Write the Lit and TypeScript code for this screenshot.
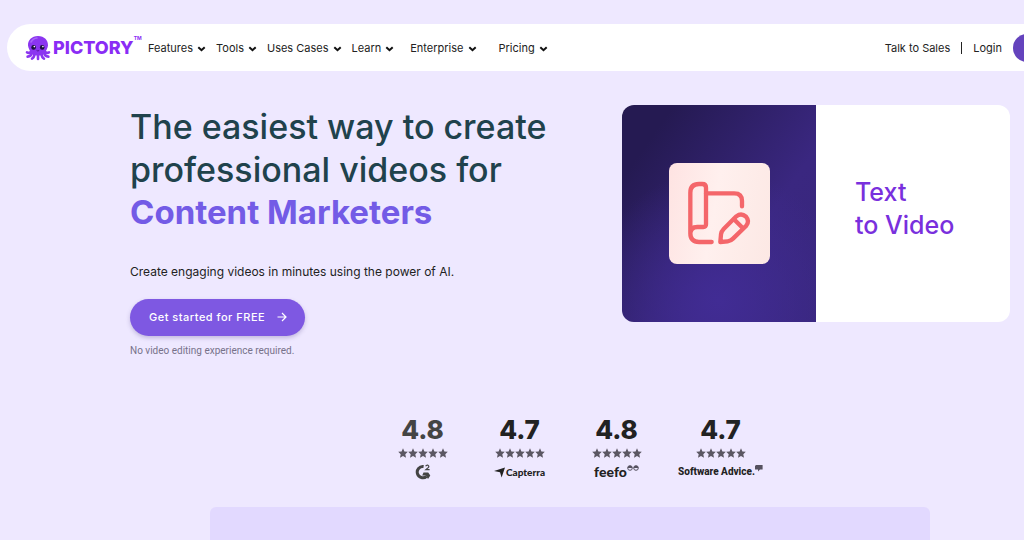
import { LitElement, html, css, svg } from "lit";
import { customElement } from "lit/decorators.js";

const STAR = "M5 0.2 6.4 3.4 9.8 3.8 7.3 6.2 8 9.7 5 8 2 9.7 2.7 6.2 0.2 3.8 3.6 3.4Z";

const menu = [
  { label: "Features", space: "" },
  { label: "Tools", space: "" },
  { label: "Uses Cases", space: "" },
  { label: "Learn", space: "wide" },
  { label: "Enterprise", space: "wider" },
  { label: "Pricing", space: "" },
];

const g2 = html`<svg width="16" height="16" viewBox="0 0 16 16" role="img" aria-label="G2">
  <path d="M8.6 2.6A5.6 5.6 0 1 0 11.6 12.3" fill="none" stroke="currentColor" stroke-width="3"/>
  <path d="M8.5 8.4H13.2L15.3 11.6 13 15 10.9 11.4H7.2Z" fill="currentColor"/>
  <path d="M10.6 2.3Q11.4 0.8 12.9 1.2 14.6 2 13.2 3.6L10.9 5.6H14.6" fill="none" stroke="currentColor" stroke-width="1.2"/>
</svg>`;

const capterra = html`<svg width="11" height="11" viewBox="0 0 11 11" aria-hidden="true">
  <path d="M0 4 11 0.5 7.6 10.5 6 5.2Z" fill="currentColor"/></svg><span class="capterra">Capterra</span>`;

const feefo = html`<span class="feefo">feefo</span><svg class="raised" width="12" height="6" viewBox="0 0 12 6" aria-hidden="true">
  <g fill="none" stroke="currentColor"><circle cx="3" cy="3" r="2.3"/><circle cx="9" cy="3" r="2.3"/></g>
  <path d="M0.7 3A2.3 2.3 0 0 1 5.3 3ZM6.7 3A2.3 2.3 0 0 1 11.3 3Z" fill="currentColor"/></svg>`;

const advice = html`<span class="advice">Software Advice.</span><svg class="raised" width="8" height="7" viewBox="0 0 8 7" aria-hidden="true">
  <path d="M1 0H7.6V4.6H5L3 6.6V4.6H0V1Z" fill="currentColor"/></svg>`;

const scores = [
  { mark: "4.8", tone: "soft", source: g2 },
  { mark: "4.7", tone: "", source: capterra },
  { mark: "4.8", tone: "", source: feefo },
  { mark: "4.7", tone: "broad", source: advice },
];

@customElement("app-root")
class AppRoot extends LitElement {
  static styles = css`
    :host {
      display: block;
      min-height: 100vh;
      box-sizing: border-box;
      padding-top: 24px;
      overflow: hidden;
      background: #eee8ff;
      color: #222;
      font-family: Inter, "Liberation Sans", sans-serif;
    }
    a { color: inherit; text-decoration: none; }
    svg { display: block; flex: none; }
    button { font: inherit; color: inherit; background: none; border: 0; padding: 0; cursor: pointer; }
    .bar {
      display: flex;
      align-items: center;
      height: 47px;
      margin: 0 -120px 0 7px;
      padding: 0 18px;
      border-radius: 24px;
      background: #fff;
      box-sizing: border-box;
      font-size: 11px;
      line-height: 16px;
      white-space: nowrap;
    }
    .brand { display: flex; align-items: center; width: 123px; color: #8a2cf5; }
    .word { margin-left: 2px; font-size: 18px; line-height: 24px; font-weight: 800; }
    .tm { align-self: flex-start; font-size: 5px; line-height: 6px; font-weight: 700; }
    .menu { display: flex; gap: 10px; flex: 1; }
    .item { display: flex; align-items: center; gap: 4px; }
    .item svg { margin-top: 2px; }
    .wide { margin-right: 6px; }
    .wider { margin-right: 12px; }
    .side { display: flex; align-items: center; gap: 11px; }
    .rule { width: 1px; height: 12px; background: #222; }
    .trial { width: 113px; height: 28px; border-radius: 14px; background: #6443bd; }

    .hero {
      display: grid;
      grid-template-columns: minmax(0, 1fr) 388px;
      gap: 24px;
      margin: 34px 14px 0 130px;
      align-items: start;
    }
    h1 { margin: 0; font-size: 34px; line-height: 43px; font-weight: 500; color: #20424c; white-space: nowrap; }
    .accent { display: block; font-size: 33px; font-weight: 700; color: #735be6; }
    .lead { margin: 28px 0 17px; font-size: 12px; line-height: 20px; }
    .cta {
      display: flex;
      align-items: center;
      gap: 12px;
      height: 37px;
      padding: 0 18px 1px 19px;
      border-radius: 19px;
      color: #fff;
      background: #7e58e2;
      box-shadow: 0 2px 4px #5a48904d;
      font-size: 11px;
      font-weight: 500;
      letter-spacing: 0.5px;
      width: fit-content;
    }
    .note { margin: 8px 0 0; font: 10px/14px Roboto, sans-serif; color: #77728a; }

    .card { display: grid; grid-template-columns: 1fr 1fr; height: 217px; border-radius: 12px; overflow: hidden; background: #fff; }
    .art {
      display: grid;
      place-items: center;
      background: radial-gradient(circle at 50% 90%, #412c94, transparent 60%), linear-gradient(125deg, #251a52 15%, #3a2780 65%, #38267c);
    }
    .tile { border-radius: 8px; background: linear-gradient(100deg, #fee3e2, #fff0ee 45%, #fce8e4); }
    .title { margin: 0; align-self: center; padding: 0 0 10px 39px; font-size: 25px; line-height: 33px; font-weight: 500; color: #7930dd; }

    .scores { display: flex; justify-content: center; margin: 56px 0 26px; padding: 0 0 0 126px; list-style: none; }
    .score { display: flex; flex-direction: column; align-items: center; width: 97px; color: #222; }
    .score.soft { color: #444; }
    .score.broad { width: 111px; }
    .mark { font-size: 26px; line-height: 32px; font-weight: 800; }
    .stars { margin-top: 2px; color: #5b5763; }
    .source { display: flex; align-items: center; height: 18px; margin-top: 5px; white-space: nowrap; line-height: 14px; }
    .capterra { margin-left: 1px; font-family: Lato, sans-serif; font-size: 10px; font-weight: 900; }
    .feefo { font-family: Lato, sans-serif; font-size: 14px; font-weight: 900; }
    .advice { font-family: Roboto, sans-serif; font-size: 10px; font-weight: 800; }
    .raised { align-self: flex-start; margin-top: 2px; color: #55515f; }
    .panel { height: 60px; margin: 0 94px 0 210px; border-radius: 6px 6px 0 0; background: #e2d9ff; }
  `;

  private octopus() {
    return html`<svg width="26" height="26" viewBox="0 0 26 26" aria-hidden="true">
      <g fill="none" stroke="#8b35f0" stroke-width="2.6" stroke-linecap="round">
        <path d="M7 15Q5 19 2 17.4M7 17Q6.4 21.4 2.6 21.6M9.5 18Q9.6 22.4 7 23.6M13 18V24M16.5 18Q16.4 22.4 19 23.6M19 17Q19.6 21.4 23.4 21.6M19 15Q21 19 24 17.4"/>
      </g>
      <path d="M13 1C19.4 1 23.2 5.4 23 10.4 22.8 13.6 20.6 15 20.6 18 17 21.4 9 21.4 5.4 18 5.4 15 3.2 13.6 3 10.4 2.8 5.4 6.6 1 13 1Z" fill="#8b35f0"/>
      <path d="M6 7Q8 3.4 12 3" fill="none" stroke="#a766f8" stroke-width="1.6" stroke-linecap="round"/>
      <circle cx="8.6" cy="12.4" r="2.3" fill="#1c1040"/><circle cx="17.2" cy="12.4" r="2.3" fill="#1c1040"/>
      <circle cx="9.3" cy="11.6" r="0.8" fill="#fff"/><circle cx="17.9" cy="11.6" r="0.8" fill="#fff"/>
      <path d="M11.6 15.4Q12.9 16.6 14.2 15.4" fill="none" stroke="#4a1390" stroke-width="0.9"/>
    </svg>`;
  }

  private script() {
    return html`<svg class="tile" width="101" height="101" viewBox="12 15 303 303" fill="none" stroke="#f4666a"
      stroke-width="13" stroke-linecap="round" stroke-linejoin="round" aria-hidden="true">
      <path d="M140 252H102Q76 252 76 226V104Q76 78 102 78H112Q123 78 123 89V199Q123 207 115 207H97Q76 207 76 228"/>
      <path d="M123 106H208Q231 106 231 129V145"/>
      <path d="M166 252 168 229Q169 220 176 213L214 175Q229 163 243 176 255 190 243 204L204 242Q197 249 188 250Z"/>
      <path d="M207 184 234 211"/>
    </svg>`;
  }

  render() {
    return html`
      <header class="bar">
        <a class="brand" href="#">${this.octopus()}<span class="word">PICTORY</span><span class="tm">TM</span></a>
        <nav class="menu">
          ${menu.map((m) => html`<button class="item ${m.space}">${m.label}
            <svg width="9" height="6" viewBox="0 0 9 6" fill="none" stroke="#111" stroke-width="2"><path d="M1.3 1.2 4.5 4.2 7.7 1.2"/></svg></button>`)}
        </nav>
        <div class="side"><a href="#">Talk to Sales</a><span class="rule"></span><a href="#">Login</a><button class="trial" aria-label="Get started"></button></div>
      </header>
      <section class="hero">
        <div>
          <h1>The easiest way to create<br>professional videos for<span class="accent">Content Marketers</span></h1>
          <p class="lead">Create engaging videos in minutes using the power of AI.</p>
          <button class="cta">Get started for FREE
            <svg width="10" height="10" viewBox="0 0 10 10" fill="none" stroke="#fff" stroke-width="1.2"><path d="M0.5 5H9M5 1 9 5 5 9"/></svg></button>
          <p class="note">No video editing experience required.</p>
        </div>
        <div class="card"><div class="art">${this.script()}</div><h2 class="title">Text<br>to Video</h2></div>
      </section>
      <ul class="scores">
        ${scores.map((s) => html`<li class="score ${s.tone}"><span class="mark">${s.mark}</span>
          <svg class="stars" width="50" height="10" viewBox="0 0 50 10" fill="currentColor" aria-hidden="true">${[0, 10, 20, 30, 40].map((x) => svg`<path d=${STAR} transform="translate(${x} 0)"/>`)}</svg>
          <span class="source">${s.source}</span></li>`)}
      </ul>
      <div class="panel"></div>
    `;
  }
}
